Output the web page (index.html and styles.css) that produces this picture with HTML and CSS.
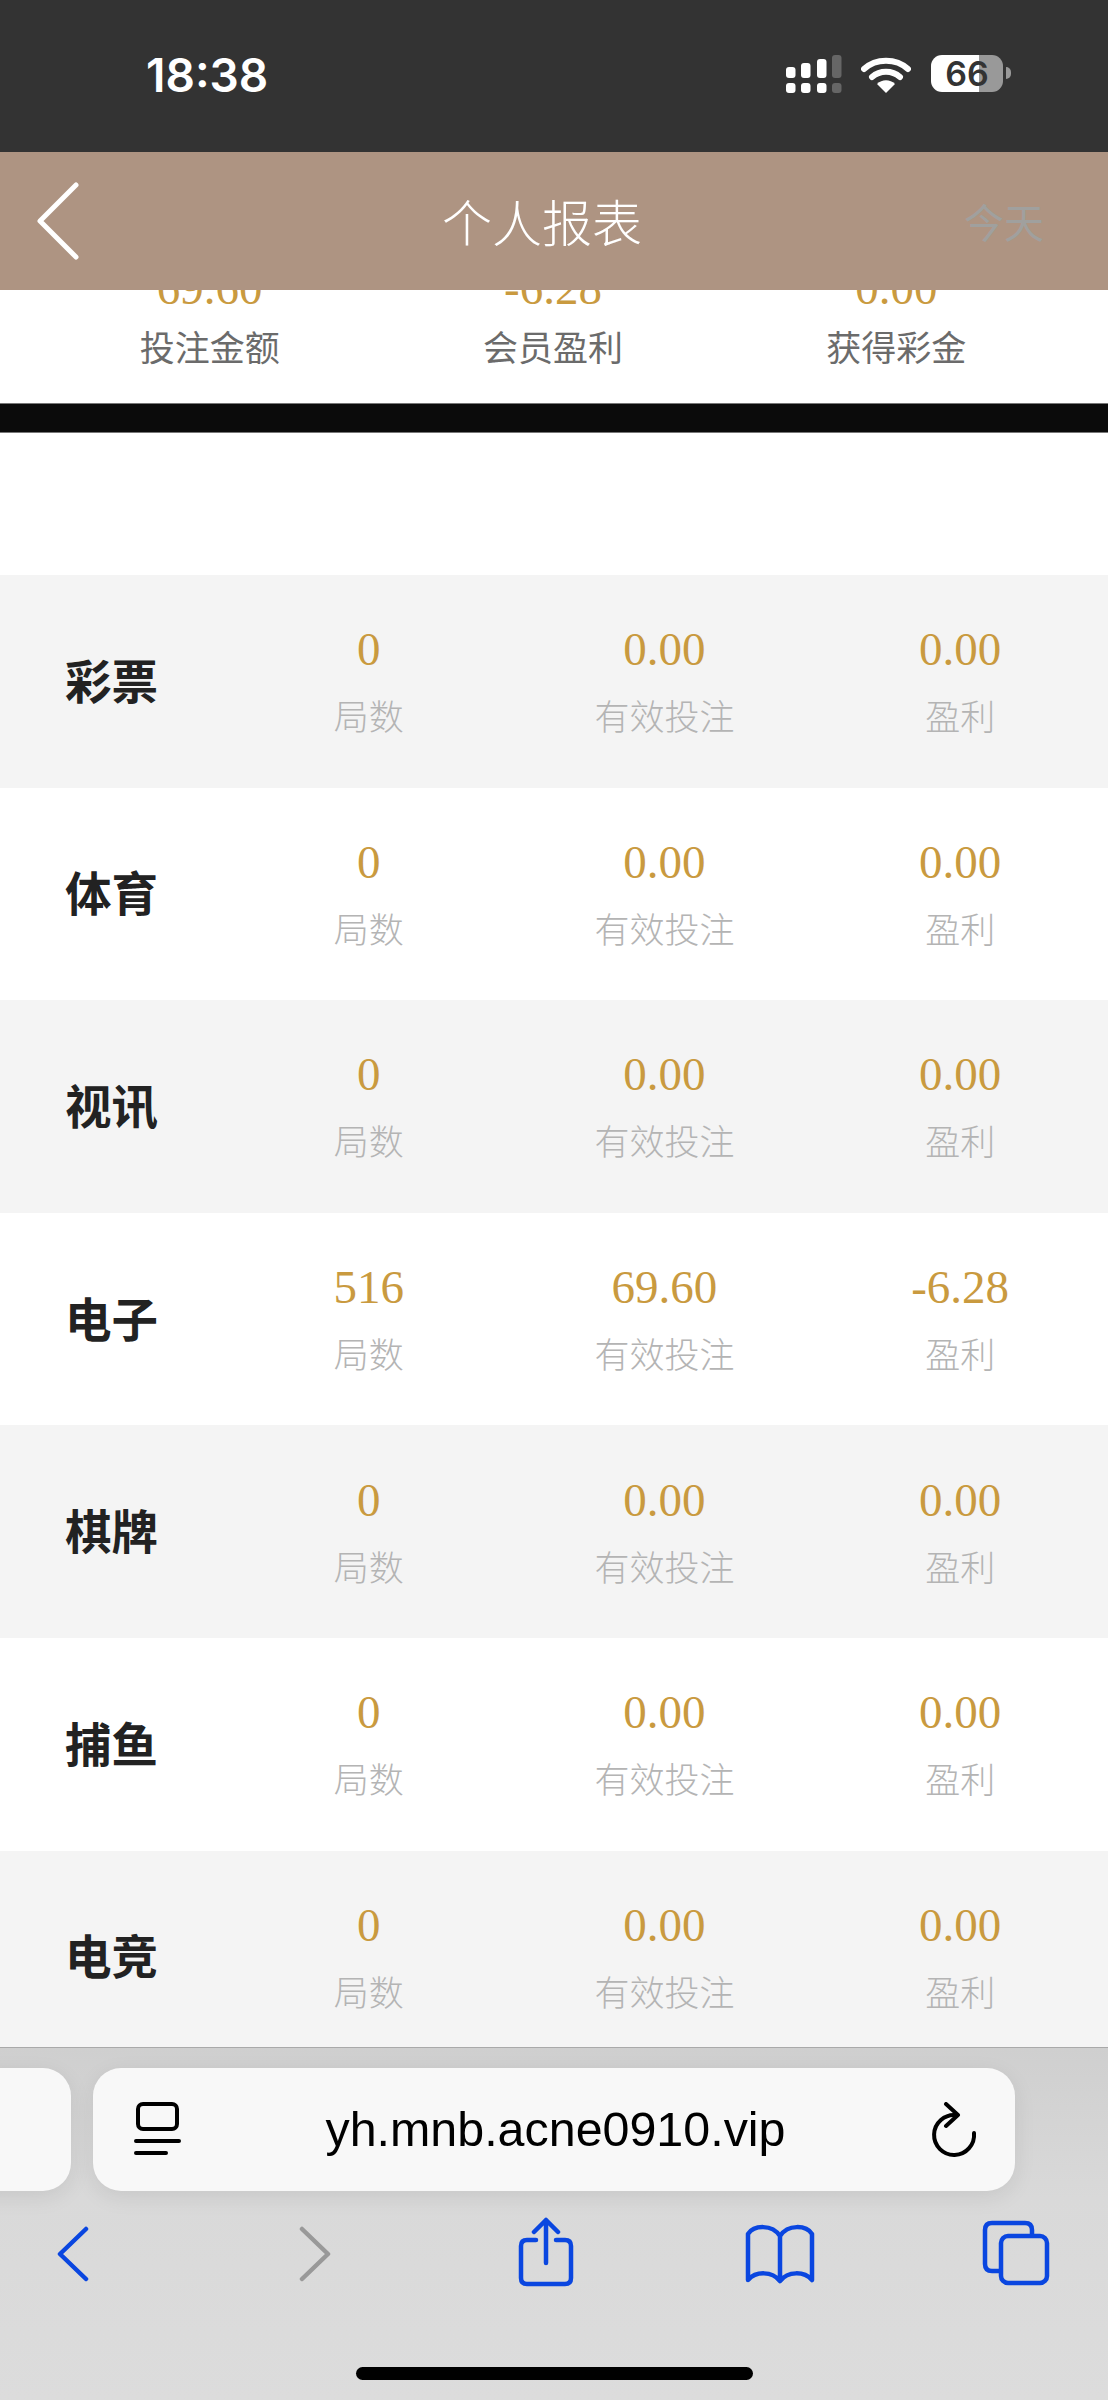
FILE: index.html
```html
<!DOCTYPE html>
<html lang="zh-CN">
<head>
	<meta charset="UTF-8">
	<meta name="viewport" content="width=device-width, initial-scale=1.0">
	<link rel="stylesheet" href="styles.css">
	<title>个人报表</title>
</head>
<body>
	<div class="page">
		<div class="statusbar">
			<span class="time">18:38</span>
			<div class="status-icons">
				<svg class="signal" width="56" height="38" viewBox="0 0 56 38">
					<rect x="0" y="12" width="9.5" height="11" rx="3" fill="#fff"/>
					<rect x="15" y="8" width="9.5" height="15" rx="3" fill="#fff"/>
					<rect x="31" y="4" width="9.5" height="19" rx="3" fill="#fff"/>
					<rect x="46" y="0" width="9.5" height="23" rx="3" fill="#666"/>
					<rect x="0" y="28" width="9.5" height="10" rx="3" fill="#fff"/>
					<rect x="15" y="28" width="9.5" height="10" rx="3" fill="#fff"/>
					<rect x="31" y="28" width="9.5" height="10" rx="3" fill="#fff"/>
					<rect x="46" y="28" width="9.5" height="10" rx="3" fill="#666"/>
				</svg>
				<svg class="wifi" width="50" height="36" viewBox="0 0 50 36">
					<path d="M3 12 C15 1 35 1 47 12" fill="none" stroke="#fff" stroke-width="6" stroke-linecap="round"/>
					<path d="M11 20 C19 13 31 13 39 20" fill="none" stroke="#fff" stroke-width="6" stroke-linecap="round"/>
					<path d="M16 27 C21 22 29 22 34 27 L25 36 Z" fill="#fff"/>
				</svg>
				<div class="battery">66</div>
				<span class="battery-nub"></span>
			</div>
		</div>

		<div class="navbar">
			<svg class="nav-back" width="44" height="80" viewBox="0 0 44 80">
				<path d="M39 4 L3 40 L39 76" fill="none" stroke="#fff" stroke-width="5" stroke-linecap="round" stroke-linejoin="round"/>
			</svg>
			<span class="nav-title">个人报表</span>
			<span class="nav-today">今天</span>
		</div>

		<div class="content">
			<div class="summary">
				<div class="summary-item"><span class="summary-value">69.60</span><span class="summary-label">投注金额</span></div>
				<div class="summary-item"><span class="summary-value">-6.28</span><span class="summary-label">会员盈利</span></div>
				<div class="summary-item"><span class="summary-value">0.00</span><span class="summary-label">获得彩金</span></div>
			</div>
			<div class="band"></div>
			<div class="spacer"></div>

			<div class="row">
				<div class="row-name">彩票</div>
				<div class="cell"><span class="num">0</span><span class="cap">局数</span></div>
				<div class="cell"><span class="num">0.00</span><span class="cap">有效投注</span></div>
				<div class="cell"><span class="num">0.00</span><span class="cap">盈利</span></div>
			</div>
			<div class="row">
				<div class="row-name">体育</div>
				<div class="cell"><span class="num">0</span><span class="cap">局数</span></div>
				<div class="cell"><span class="num">0.00</span><span class="cap">有效投注</span></div>
				<div class="cell"><span class="num">0.00</span><span class="cap">盈利</span></div>
			</div>
			<div class="row">
				<div class="row-name">视讯</div>
				<div class="cell"><span class="num">0</span><span class="cap">局数</span></div>
				<div class="cell"><span class="num">0.00</span><span class="cap">有效投注</span></div>
				<div class="cell"><span class="num">0.00</span><span class="cap">盈利</span></div>
			</div>
			<div class="row">
				<div class="row-name">电子</div>
				<div class="cell"><span class="num">516</span><span class="cap">局数</span></div>
				<div class="cell"><span class="num">69.60</span><span class="cap">有效投注</span></div>
				<div class="cell"><span class="num">-6.28</span><span class="cap">盈利</span></div>
			</div>
			<div class="row">
				<div class="row-name">棋牌</div>
				<div class="cell"><span class="num">0</span><span class="cap">局数</span></div>
				<div class="cell"><span class="num">0.00</span><span class="cap">有效投注</span></div>
				<div class="cell"><span class="num">0.00</span><span class="cap">盈利</span></div>
			</div>
			<div class="row">
				<div class="row-name">捕鱼</div>
				<div class="cell"><span class="num">0</span><span class="cap">局数</span></div>
				<div class="cell"><span class="num">0.00</span><span class="cap">有效投注</span></div>
				<div class="cell"><span class="num">0.00</span><span class="cap">盈利</span></div>
			</div>
			<div class="row">
				<div class="row-name">电竞</div>
				<div class="cell"><span class="num">0</span><span class="cap">局数</span></div>
				<div class="cell"><span class="num">0.00</span><span class="cap">有效投注</span></div>
				<div class="cell"><span class="num">0.00</span><span class="cap">盈利</span></div>
			</div>
		</div>

		<div class="browser">
			<div class="tabs">
				<div class="pill pill-prev"></div>
				<div class="pill pill-main">
					<svg class="reader" width="47" height="56" viewBox="0 0 47 56">
						<rect x="4" y="2" width="39" height="25" rx="5" fill="none" stroke="#000" stroke-width="4"/>
						<path d="M2 39 H45 M2 51 H32" fill="none" stroke="#000" stroke-width="4" stroke-linecap="round"/>
					</svg>
					<span class="url">yh.mnb.acne0910.vip</span>
					<svg class="reload" width="50" height="56" viewBox="0 0 50 56">
						<path d="M44 31 A20 20 0 1 1 26 13" fill="none" stroke="#000" stroke-width="4" stroke-linecap="round"/>
						<path d="M16 2 L28 13 L16 24" fill="none" stroke="#000" stroke-width="4" stroke-linecap="round" stroke-linejoin="round"/>
					</svg>
				</div>
			</div>
			<div class="toolbar">
				<svg class="tool tool-back" width="32" height="56" viewBox="0 0 32 56">
					<path d="M29 3 L3 28 L29 53" fill="none" stroke="#0a46e0" stroke-width="4.5" stroke-linecap="round" stroke-linejoin="round"/>
				</svg>
				<svg class="tool tool-forward" width="32" height="56" viewBox="0 0 32 56">
					<path d="M3 3 L29 28 L3 53" fill="none" stroke="#999" stroke-width="4.5" stroke-linecap="round" stroke-linejoin="round"/>
				</svg>
				<svg class="tool tool-share" width="58" height="72" viewBox="0 0 58 72">
					<path d="M19 23 H10 Q4 23 4 29 V61 Q4 67 10 67 H48 Q54 67 54 61 V29 Q54 23 48 23 H39" fill="none" stroke="#0a46e0" stroke-width="4.5" stroke-linecap="round"/>
					<path d="M29 46 V3 M17 15 L29 3 L41 15" fill="none" stroke="#0a46e0" stroke-width="4.5" stroke-linecap="round" stroke-linejoin="round"/>
				</svg>
				<svg class="tool tool-book" width="72" height="60" viewBox="0 0 72 60">
					<path d="M36 12 C28 0 10 1 4 10 V56 C12 47 28 47 36 57 C44 47 60 47 68 56 V10 C62 1 44 0 36 12 Z M36 12 V57" fill="none" stroke="#0a46e0" stroke-width="4.5" stroke-linecap="round" stroke-linejoin="round"/>
				</svg>
				<svg class="tool tool-tabs" width="70" height="66" viewBox="0 0 70 66">
					<path d="M19 51 H11 Q4 51 4 44 V10 Q4 3 11 3 H44 Q51 3 51 10 V16" fill="none" stroke="#0a46e0" stroke-width="4.5"/>
					<rect x="20" y="16" width="46" height="47" rx="7" fill="none" stroke="#0a46e0" stroke-width="4.5"/>
				</svg>
			</div>
			<div class="home-bar"></div>
		</div>
	</div>
</body>
</html>
```

FILE: styles.css
```css
*{
	box-sizing:border-box;
}
body{
	margin:0;
	background:#fff;
	font-family:"Noto Sans CJK SC","Liberation Sans",sans-serif;
}
.page{
	width:1108px;
	height:2400px;
	display:flex;
	flex-direction:column;
	overflow:hidden;
}

/* status bar */
.statusbar{
	height:152px;
	background:#333;
	display:flex;
	align-items:flex-start;
	justify-content:space-between;
	padding:49px 97px 0 146px;
	flex:none;
}
.time{
	color:#fff;
	font-family:Inter,"Liberation Sans",sans-serif;
	font-weight:600;
	font-size:46px;
	line-height:52px;
}
.status-icons{
	display:flex;
	align-items:flex-start;
	padding-top:6px;
}
.signal{
	margin-top:0;
	margin-right:19px;
}
.wifi{
	margin-top:2px;
	margin-right:20px;
}
.battery{
	width:72px;
	height:37px;
	border-radius:11px;
	background:linear-gradient(90deg,#fff 66%,#999 66%);
	color:#333;
	font-family:Inter,"Liberation Sans",sans-serif;
	font-weight:600;
	font-size:34px;
	line-height:37px;
	text-align:center;
}
.battery-nub{
	width:5px;
	height:12px;
	margin:12px 0 0 3px;
	background:#999;
	border-radius:0 5px 5px 0;
}

/* nav */
.navbar{
	position:relative;
	z-index:2;
	height:138px;
	flex:none;
	background:#ae9482;
	display:flex;
	align-items:center;
	justify-content:center;
}
.nav-back{
	position:absolute;
	left:37px;
	top:29px;
}
.nav-title{
	color:#fff;
	font-size:50px;
	font-weight:300;
	line-height:60px;
	margin:0 24px 3px 0;
}
.nav-today{
	position:absolute;
	right:64px;
	top:44px;
	color:#a0a09e;
	font-size:40px;
	line-height:50px;
}

/* report */
.content{
	flex:1;
	min-height:0;
	overflow:hidden;
	background:#fff;
}
.summary{
	height:143px;
	margin-top:-30px;
	padding:0 40px 0 38px;
	display:grid;
	grid-template-columns:repeat(3,1fr);
}
.summary-item{
	display:flex;
	flex-direction:column;
	align-items:center;
}
.summary-value{
	color:#c99a3f;
	font-family:"Liberation Serif",serif;
	font-size:47px;
	line-height:57px;
}
.summary-label{
	color:#6b6b6b;
	font-size:35px;
	line-height:57px;
}
.band{
	height:30px;
	background:#0b0b0b;
	border-top:1px solid #777;
	border-bottom:1px solid #777;
}
.spacer{
	height:142px;
}
.row{
	height:212.6px;
	display:grid;
	grid-template-columns:221px 1fr 1fr 1fr;
	align-items:center;
}
.row:nth-of-type(even){
	background:#f4f4f4;
}
.row-name{
	padding:0 0 6px 65px;
	color:#222;
	font-size:46.5px;
	font-weight:700;
}
.cell{
	display:flex;
	flex-direction:column;
	align-items:center;
	padding-top:3px;
}
.num{
	color:#c99a3f;
	font-family:"Liberation Serif",serif;
	font-size:47px;
	line-height:64px;
}
.cap{
	color:#b4b4b4;
	font-size:35px;
	font-weight:300;
	line-height:67px;
}

/* safari chrome */
.browser{
	height:353px;
	flex:none;
	border-top:1px solid #a9a9a9;
	background:linear-gradient(180deg,#cfcfcf 0,#d9d9d9 150px,#dcdcdc 100%);
	overflow:hidden;
}
.tabs{
	display:flex;
	gap:22px;
	padding-top:20px;
	margin-left:-40px;
}
.pill{
	height:123px;
	background:#f8f8f8;
	border-radius:28px;
	box-shadow:0 6px 22px rgba(0,0,0,.08);
	flex:none;
}
.pill-prev{
	width:111px;
}
.pill-main{
	width:922px;
	display:flex;
	align-items:center;
	justify-content:space-between;
	padding:0 35px 0 41px;
}
.url{
	color:#000;
	font-family:"Liberation Sans",sans-serif;
	font-size:48.4px;
	margin-bottom:2px;
}
.toolbar{
	display:flex;
	align-items:flex-start;
	height:176px;
	padding-top:26px;
}
.tool-back{
	margin:9px 0 0 57px;
}
.tool-forward{
	margin:9px 0 0 210px;
}
.tool-share{
	margin:0 0 0 186px;
}
.tool-book{
	margin:7px 0 0 169px;
}
.tool-tabs{
	margin:3px 0 0 165px;
}
.home-bar{
	width:397px;
	height:13px;
	margin:0 auto;
	background:#000;
	border-radius:7px;
}
```
